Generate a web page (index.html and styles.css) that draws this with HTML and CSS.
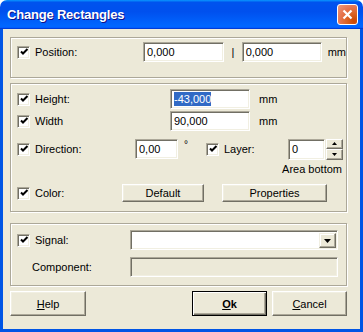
FILE: index.html
```html
<!DOCTYPE html>
<html lang="en">
  <head>
    <meta charset="UTF-8" />
    <title>Change Rectangles</title>
    <link rel="stylesheet" href="styles.css">
  </head>
  <body>
    <div class="window">
      <div class="titlebar">
        <span class="title">Change Rectangles</span>
        <span class="close">
          <svg width="11" height="11" viewBox="0 0 11 11"><path d="M1.5 1.5 L9.5 9.5 M9.5 1.5 L1.5 9.5" stroke="#fff" stroke-width="2.2"/></svg>
        </span>
      </div>

      <div class="content">
        <div class="group group-position">
          <div class="row">
            <span class="cb"><svg width="9" height="9" viewBox="0 0 9 9"><path d="M1 3.5 L3 5.5 L7.5 1" fill="none" stroke="#000" stroke-width="2"/></svg></span>
            <span class="lbl w-position">Position:</span>
            <span class="field w-pos1">0,000</span>
            <span class="sep">|</span>
            <span class="field w-pos2">0,000</span>
            <span class="unit">mm</span>
          </div>
        </div>

        <div class="group group-size">
          <div class="row">
            <span class="cb"><svg width="9" height="9" viewBox="0 0 9 9"><path d="M1 3.5 L3 5.5 L7.5 1" fill="none" stroke="#000" stroke-width="2"/></svg></span>
            <span class="lbl w-size">Height:</span>
            <span class="field w-size-field"><span class="selected">-43,000</span></span>
            <span class="unit unit-size">mm</span>
          </div>
          <div class="row row-width">
            <span class="cb"><svg width="9" height="9" viewBox="0 0 9 9"><path d="M1 3.5 L3 5.5 L7.5 1" fill="none" stroke="#000" stroke-width="2"/></svg></span>
            <span class="lbl w-size">Width</span>
            <span class="field w-size-field">90,000</span>
            <span class="unit unit-size">mm</span>
          </div>
          <div class="row row-direction">
            <span class="cb"><svg width="9" height="9" viewBox="0 0 9 9"><path d="M1 3.5 L3 5.5 L7.5 1" fill="none" stroke="#000" stroke-width="2"/></svg></span>
            <span class="lbl w-direction">Direction:</span>
            <span class="field w-dir">0,00</span>
            <span class="deg">°</span>
            <span class="cb"><svg width="9" height="9" viewBox="0 0 9 9"><path d="M1 3.5 L3 5.5 L7.5 1" fill="none" stroke="#000" stroke-width="2"/></svg></span>
            <span class="lbl w-layer">Layer:</span>
            <span class="field w-layer-field">0</span>
            <span class="spinner">
              <span class="spin-btn"><svg width="5" height="3" viewBox="0 0 5 3"><path d="M2.5 0 L5 3 L0 3 Z" fill="#000"/></svg></span>
              <span class="spin-btn"><svg width="5" height="3" viewBox="0 0 5 3"><path d="M0 0 L5 0 L2.5 3 Z" fill="#000"/></svg></span>
            </span>
          </div>
          <div class="row-note">Area bottom</div>
          <div class="row row-color">
            <span class="cb"><svg width="9" height="9" viewBox="0 0 9 9"><path d="M1 3.5 L3 5.5 L7.5 1" fill="none" stroke="#000" stroke-width="2"/></svg></span>
            <span class="lbl w-color">Color:</span>
            <span class="btn btn-default">Default</span>
            <span class="btn btn-props">Properties</span>
          </div>
        </div>

        <div class="group group-signal">
          <div class="row">
            <span class="cb"><svg width="9" height="9" viewBox="0 0 9 9"><path d="M1 3.5 L3 5.5 L7.5 1" fill="none" stroke="#000" stroke-width="2"/></svg></span>
            <span class="lbl w-signal">Signal:</span>
            <span class="field combo">
              <span class="combo-btn"><svg width="7" height="4" viewBox="0 0 7 4"><path d="M0 0 L7 0 L3.5 4 Z" fill="#000"/></svg></span>
            </span>
          </div>
          <div class="row row-component">
            <span class="lbl w-component">Component:</span>
            <span class="field combo disabled"></span>
          </div>
        </div>

        <div class="buttons">
          <span class="btn btn-help"><u>H</u>elp</span>
          <span class="spacer"></span>
          <span class="btn btn-ok"><b><u>O</u>k</b></span>
          <span class="btn btn-cancel"><u>C</u>ancel</span>
        </div>
      </div>
    </div>
  </body>
</html>
```

FILE: styles.css
```css
body {
  margin: 0;
  background: #ffffff;
  font-family: "Liberation Sans", Arial, sans-serif;
  font-size: 11px;
  color: #000;
}

.window {
  width: 363px;
  height: 332px;
  display: flex;
  flex-direction: column;
}

.titlebar {
  height: 29px;
  flex-shrink: 0;
  display: flex;
  align-items: center;
  padding: 0 5px 0 7px;
  border-radius: 7px 7px 0 0;
  background: linear-gradient(180deg, #0997ff, #0053ee 8%, #0050ee 40%, #0066ff 88%, #0066ff 93%, #005bff 95%, #003dd7 96%, #003dd7);
}

.title {
  flex: 1;
  color: #fff;
  font-weight: bold;
  font-size: 13px;
  letter-spacing: -0.2px;
  text-shadow: 1px 1px 0 #0f1089;
}

.close {
  width: 21px;
  height: 21px;
  box-sizing: border-box;
  border: 1px solid #fff;
  border-radius: 3px;
  display: flex;
  align-items: center;
  justify-content: center;
  background: radial-gradient(circle at 85% 85%, #cc4600 0, #dc6527 35%, #e5734d 60%, #ee9b7d 100%);
}

.content {
  flex: 1;
  background: #ece9d8;
  border: 3px solid #0055e5;
  border-top: none;
  padding: 8px 13px 0 7px;
  display: flex;
  flex-direction: column;
}

/* etched group frames */
.group {
  box-sizing: border-box;
  border: 1px solid #aca899;
  box-shadow: inset 1px 1px 0 #fff, 1px 1px 0 #fff;
  padding-left: 6px;
}

.group-position {
  height: 41px;
  padding-top: 4px;
}

.group-size {
  height: 129px;
  margin-top: 5px;
  padding-top: 5px;
}

.group-signal {
  height: 63px;
  margin-top: 11px;
  padding-top: 6px;
}

.row {
  display: flex;
  align-items: center;
  height: 20px;
}

.cb {
  width: 13px;
  height: 13px;
  box-sizing: border-box;
  flex-shrink: 0;
  background: #fff;
  border-top: 1px solid #aca899;
  border-left: 1px solid #aca899;
  border-right: 1px solid #fff;
  border-bottom: 1px solid #fff;
  box-shadow: inset 1px 1px 0 #716f64, inset -1px -1px 0 #f1efe2;
  display: flex;
  align-items: center;
  justify-content: center;
  margin-right: 5px;
}

.cb svg {
  margin: 1px 0 0 1px;
}

.lbl {
  flex-shrink: 0;
  white-space: nowrap;
}

.w-position { width: 108px; }
.w-size { width: 135px; }
.w-direction { width: 100px; }
.w-layer { width: 64px; }
.w-color { width: 87px; }
.w-signal { width: 95px; }
.w-component { width: 98px; margin-left: 15px; }

.field {
  height: 20px;
  box-sizing: border-box;
  flex-shrink: 0;
  background: #fff;
  border-top: 1px solid #aca899;
  border-left: 1px solid #aca899;
  border-right: 1px solid #fff;
  border-bottom: 1px solid #fff;
  box-shadow: inset 1px 1px 0 #716f64, inset -1px -1px 0 #f1efe2;
  padding: 0 3px;
  line-height: 18px;
  white-space: nowrap;
}

.w-pos1 { width: 81px; }
.w-pos2 { width: 80px; }
.w-size-field { width: 80px; }
.w-dir { width: 43px; }
.w-layer-field { width: 37px; height: 21px; line-height: 19px; }

.selected {
  background: #316ac5;
  color: #fff;
  padding: 1px 0;
}

.sep {
  width: 18px;
  text-align: center;
}

.unit {
  margin-left: 6px;
}

.unit-size {
  margin-left: 9px;
}

.row-width {
  margin-top: 2px;
}

.row-direction {
  margin-top: 8px;
}

.deg {
  width: 28px;
  box-sizing: border-box;
  padding-left: 6px;
  align-self: flex-start;
  font-size: 10px;
}

.spinner {
  display: flex;
  flex-direction: column;
  margin-left: 1px;
  width: 17px;
  height: 21px;
}

.spin-btn {
  flex: 1;
  box-sizing: border-box;
  display: flex;
  align-items: center;
  justify-content: center;
  background: #ece9d8;
  border: 1px solid;
  border-color: #fff #716f64 #716f64 #fff;
  box-shadow: inset -1px -1px 0 #aca899;
}

.row-note {
  height: 14px;
  margin-top: 3px;
  text-align: right;
  padding-right: 4px;
  line-height: 14px;
}

.row-color {
  margin-top: 8px;
  height: 18px;
}

.btn {
  box-sizing: border-box;
  flex-shrink: 0;
  display: flex;
  align-items: center;
  justify-content: center;
  background: #ece9d8;
  border: 1px solid;
  border-color: #fff #716f64 #716f64 #fff;
  box-shadow: inset -1px -1px 0 #aca899, inset 1px 1px 0 #f1efe2;
}

.btn-default {
  width: 82px;
  height: 18px;
}

.btn-props {
  width: 105px;
  height: 18px;
  margin-left: 18px;
}

.combo {
  width: 208px;
  display: flex;
  justify-content: flex-end;
  align-items: stretch;
  padding: 2px 1px 1px 0;
}

.combo-btn {
  width: 17px;
  box-sizing: border-box;
  display: flex;
  align-items: center;
  justify-content: center;
  background: #ece9d8;
  border: 1px solid;
  border-color: #f1efe2 #716f64 #716f64 #f1efe2;
  box-shadow: inset -1px -1px 0 #aca899, inset 1px 1px 0 #fff;
}

.disabled {
  background: #ece9d8;
}

.row-component {
  margin-top: 7px;
}

.buttons {
  display: flex;
  margin-top: 5px;
  height: 25px;
}

.btn-help,
.btn-ok,
.btn-cancel {
  height: 25px;
}

.btn-help {
  width: 76px;
}

.spacer {
  flex: 1;
}

.btn-ok {
  width: 75px;
  border: 1px solid #000;
  box-shadow: inset 1px 1px 0 #fff, inset -1px -1px 0 #716f64, inset -2px -2px 0 #aca899;
}

.btn-cancel {
  width: 75px;
  margin-left: 5px;
}
```
